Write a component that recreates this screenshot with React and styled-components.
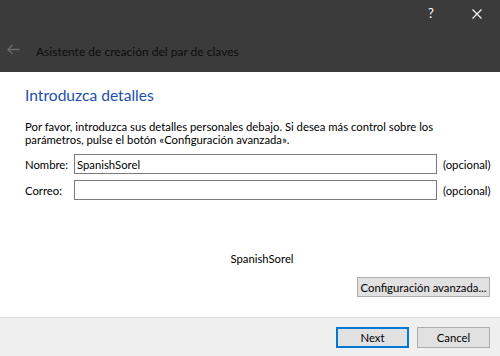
import React from 'react'
import styled, { createGlobalStyle } from 'styled-components'

const GlobalStyle = createGlobalStyle`
  html, body {
    margin: 0;
    padding: 0;
    background: #ffffff;
  }
  body {
    font-family: Lato, 'Liberation Sans', sans-serif;
    font-size: 11.3px;
    color: #000;
  }
`

const App = () => {
  return (
    <>
      <GlobalStyle />
      <StyledWindow>
        <StyledTitleBar>
          <StyledCaptionRow>
            <StyledCaptionButton>?</StyledCaptionButton>
            <StyledCaptionButton>
              <svg width='10' height='10' viewBox='0 0 10 10'>
                <path d='M0.5 0.5 L9.5 9.5 M9.5 0.5 L0.5 9.5' stroke='#ffffff' strokeWidth='1.1' fill='none' />
              </svg>
            </StyledCaptionButton>
          </StyledCaptionRow>
          <StyledNavRow>
            <StyledBack>
              <svg width='13' height='11' viewBox='0 0 13 11'>
                <path d='M12.5 5.5 H1 M5.5 1 L1 5.5 L5.5 10' stroke='#6b6b6b' strokeWidth='1.3' fill='none' />
              </svg>
            </StyledBack>
            <StyledWizardTitle>Asistente de creación del par de claves</StyledWizardTitle>
          </StyledNavRow>
        </StyledTitleBar>

        <StyledContent>
          <StyledHeading>Introduzca detalles</StyledHeading>
          <StyledIntro>
            Por favor, introduzca sus detalles personales debajo. Si desea más control sobre los
            <br />
            parámetros, pulse el botón «Configuración avanzada».
          </StyledIntro>

          <StyledForm>
            <StyledLabel>Nombre:</StyledLabel>
            <StyledInput defaultValue='SpanishSorel' />
            <StyledHint>(opcional)</StyledHint>
            <StyledLabel>Correo:</StyledLabel>
            <StyledInput defaultValue='' />
            <StyledHint>(opcional)</StyledHint>
          </StyledForm>

          <StyledPreview>SpanishSorel</StyledPreview>

          <StyledAdvancedRow>
            <StyledButton $width={133}>Configuración avanzada...</StyledButton>
          </StyledAdvancedRow>
        </StyledContent>

        <StyledFooter>
          <StyledButton $width={73} $default>Next</StyledButton>
          <StyledButton $width={73}>Cancel</StyledButton>
        </StyledFooter>
      </StyledWindow>
    </>
  )
}

export default App

const StyledWindow = styled.div`
  width: 500px;
  height: 356px;
  display: flex;
  flex-direction: column;
  overflow: hidden;
  white-space: nowrap;
`

const StyledTitleBar = styled.header`
  height: 72px;
  background: #3b3b3b;
  display: flex;
  flex-direction: column;
`

const StyledCaptionRow = styled.div`
  height: 27px;
  display: flex;
  justify-content: flex-end;
`

const StyledCaptionButton = styled.div`
  width: 46px;
  height: 27px;
  display: flex;
  align-items: center;
  justify-content: center;
  color: #ffffff;
  font-size: 13px;
  line-height: 1;
`

const StyledNavRow = styled.div`
  flex: 1;
  display: flex;
  align-items: center;
  padding: 0 0 0 7px;
`

const StyledBack = styled.div`
  width: 29px;
  display: flex;
  align-items: center;
  margin-top: -1px;
`

const StyledWizardTitle = styled.h1`
  margin: 3px 0 0;
  font-size: 12px;
  font-weight: 400;
  color: #0d0d0d;
`

const StyledContent = styled.main`
  flex: 1;
  display: flex;
  flex-direction: column;
  padding: 0 10px 0 25px;
  background: #ffffff;
`

const StyledHeading = styled.h2`
  margin: 13px 0 0;
  font-size: 15.6px;
  line-height: 20px;
  font-weight: 400;
  color: #1a4fb0;
`

const StyledIntro = styled.p`
  margin: 15px 0 0;
  line-height: 13px;
`

const StyledForm = styled.div`
  margin-top: 8px;
  display: grid;
  grid-template-columns: 49px 363px auto;
  grid-auto-rows: 20px;
  row-gap: 6px;
  align-items: center;
`

const StyledLabel = styled.label``

const StyledInput = styled.input`
  box-sizing: border-box;
  height: 20px;
  width: 100%;
  margin: 0;
  padding: 0 2px;
  border: 1px solid #7a7a7a;
  font-family: inherit;
  font-size: inherit;
  color: #000;
  outline: none;
`

const StyledHint = styled.span`
  padding-left: 6px;
`

const StyledPreview = styled.div`
  margin-top: 52px;
  line-height: 14px;
  text-align: center;
  padding-left: 9px;
`

const StyledAdvancedRow = styled.div`
  margin-top: 11px;
  display: flex;
  justify-content: flex-end;
`

const StyledButton = styled.button`
  box-sizing: border-box;
  width: ${(props) => props.$width}px;
  height: 20px;
  margin: 0;
  padding: 0;
  background: #e1e1e1;
  border: ${(props) => (props.$default ? '2px solid #0078d7' : '1px solid #adadad')};
  font-family: inherit;
  font-size: inherit;
  color: #000;
  white-space: nowrap;
  display: flex;
  align-items: center;
  justify-content: center;
`

const StyledFooter = styled.footer`
  height: 39px;
  box-sizing: border-box;
  border-top: 1px solid #dcdcdc;
  background: #efefef;
  display: flex;
  justify-content: flex-end;
  align-items: flex-start;
  gap: 8px;
  padding: 9px 10px 0 0;

  button {
    height: 21px;
  }
`
